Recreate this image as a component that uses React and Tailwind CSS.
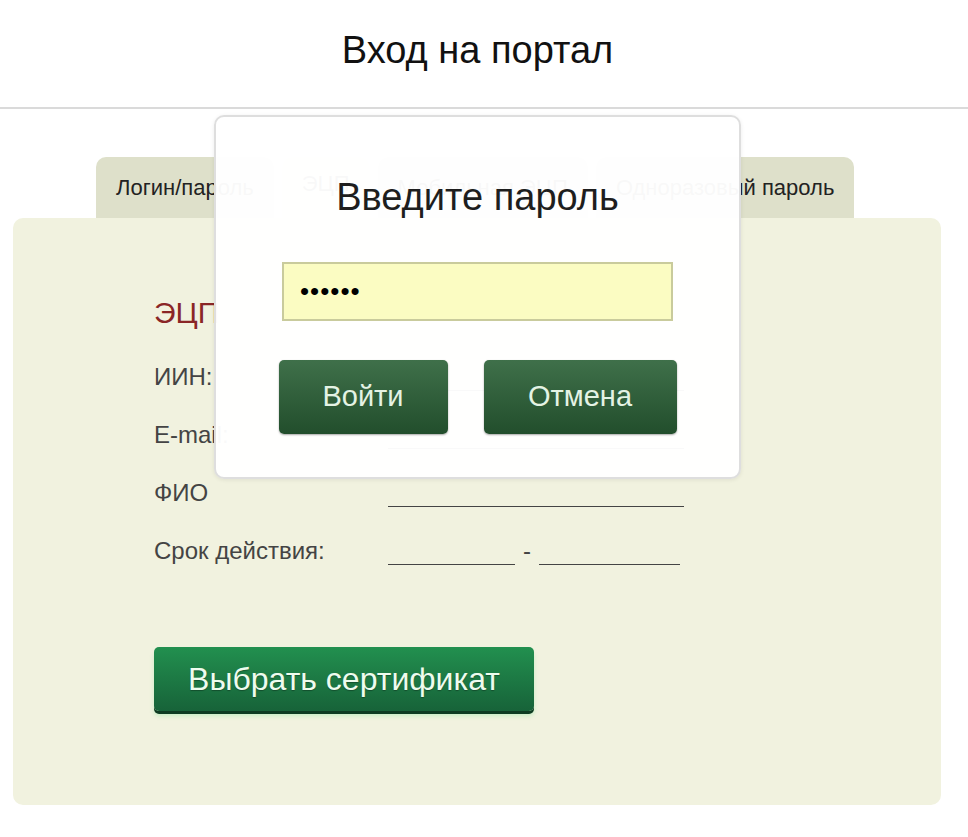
import React from "react";

const tabs = [
  { label: "Логин/пароль", active: false },
  { label: "ЭЦП", active: true },
  { label: "Мобильная ЭЦП", active: false },
  { label: "Одноразовый пароль", active: false },
];

const fields = [
  { label: "ИИН:", kind: "line" },
  { label: "E-mail:", kind: "line" },
  { label: "ФИО", kind: "line" },
  { label: "Срок действия:", kind: "range" },
];

const PasswordDialog = () => {
  return (
    <div className="absolute left-[214px] top-[115px] w-[527px] h-[364px] rounded-[10px] border-2 border-[#dedede] bg-white/[0.97] shadow-[0_1px_4px_rgba(0,0,0,0.08)] flex flex-col items-center">
      <div className="mt-[61px] text-[38px] leading-none text-[#1e1e1e]">Введите пароль</div>
      <div className="mt-[46px] w-[391px] h-[59px] border-2 border-[#c9cb9c] bg-[#fbfcc2] flex items-center pl-[16px] text-[26px] text-black tracking-[1px]">
        ••••••
      </div>
      <div className="mt-[39px] w-[398px] flex justify-between">
        <button className="w-[169px] h-[74px] rounded-[5px] bg-gradient-to-b from-[#3f704a] to-[#224e2c] shadow-[0_1px_2px_rgba(0,0,0,0.35)] text-[29px] text-[#e4f3e4]">
          Войти
        </button>
        <button className="w-[193px] h-[74px] rounded-[5px] bg-gradient-to-b from-[#3f704a] to-[#224e2c] shadow-[0_1px_2px_rgba(0,0,0,0.35)] text-[29px] text-[#e4f3e4]">
          Отмена
        </button>
      </div>
    </div>
  );
};

export default function App() {
  return (
    <div className="relative w-[968px] h-[837px] bg-white font-['Liberation_Sans',Arial,sans-serif] overflow-hidden">
      {/* Header */}
      <div className="h-[109px] border-b-2 border-[#dadada] flex justify-center items-center pr-[13px]">
        <h1 className="text-[38px] leading-none text-[#111] -mt-[8px]">Вход на портал</h1>
      </div>

      {/* Tabs */}
      <div className="mt-[48px] ml-[96px] flex gap-2">
        {tabs.map((tab, i) => (
          <div
            key={i}
            className={
              tab.active
                ? "h-[61px] px-5 rounded-t-[10px] bg-[#f1f2df] flex items-start pt-[10px] text-[22px] text-[#333]"
                : "h-[61px] px-5 rounded-t-[10px] bg-[#dee0ca] flex items-center text-[22px] text-[#222]"
            }
          >
            {tab.label}
          </div>
        ))}
      </div>

      {/* Panel */}
      <div className="ml-[13px] w-[928px] h-[587px] rounded-[10px] bg-[#f1f2df] pl-[141px] pt-[80px]">
        <h2 className="text-[30px] leading-none text-[#8a2626]">ЭЦП</h2>
        <div className="mt-[38px] flex flex-col gap-[35px]">
          {fields.map((f, i) => (
            <div key={i} className="flex items-end h-[23px]">
              <div className="w-[234px] text-[24px] leading-none text-[#444]">{f.label}</div>
              {f.kind === "line" ? (
                <div className="w-[296px] border-b-[1.5px] border-[#444] mb-[-2px]"></div>
              ) : (
                <div className="flex items-end">
                  <div className="w-[127px] border-b-[1.5px] border-[#444] mb-[-2px]"></div>
                  <div className="mx-[8px] text-[24px] leading-none text-[#444]">-</div>
                  <div className="w-[141px] border-b-[1.5px] border-[#444] mb-[-2px]"></div>
                </div>
              )}
            </div>
          ))}
        </div>
        <button className="mt-[84px] w-[380px] h-[64px] rounded-[5px] bg-gradient-to-b from-[#22904f] to-[#176339] shadow-[0_3px_0_#0e3c22,0_5px_4px_rgba(120,230,150,0.35)] text-[32px] text-[#eefcee] [text-shadow:0_1px_1px_rgba(0,0,0,0.3)]">
          Выбрать сертификат
        </button>
      </div>

      <PasswordDialog />
    </div>
  );
}
